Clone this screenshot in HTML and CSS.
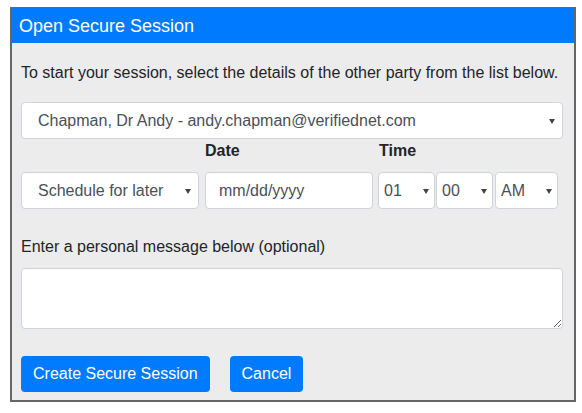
FILE: index.html
```html
<!DOCTYPE html>
<html lang="en">
<head>
    <meta charset="UTF-8">
    <meta name="viewport" content="width=device-width, initial-scale=1.0">
    <title>Open Secure Session</title>
    <link rel="stylesheet" href="styles.css">
</head>
<body>

    <div class="card">
        <div class="card-header">Open Secure Session</div>
        <div class="card-body">
            <p class="intro">To start your session, select the details of the other party from the list below.</p>

            <div class="select-wrap">
                <select class="field field-wide">
                    <option>Chapman, Dr Andy - andy.chapman@verifiednet.com</option>
                </select>
            </div>

            <div class="schedule">
                <span></span>
                <label class="head">Date</label>
                <label class="head">Time</label>

                <div class="select-wrap">
                    <select class="field field-wide">
                        <option>Schedule for later</option>
                        <option>Start now</option>
                    </select>
                </div>
                <input type="text" class="field date-box" placeholder="mm/dd/yyyy">
                <div class="time">
                    <div class="select-wrap hour">
                        <select class="field field-small"><option>01</option></select>
                    </div>
                    <div class="select-wrap minute">
                        <select class="field field-small"><option>00</option></select>
                    </div>
                    <div class="select-wrap ampm">
                        <select class="field field-small"><option>AM</option><option>PM</option></select>
                    </div>
                </div>
            </div>

            <label class="msg-label" for="message">Enter a personal message below (optional)</label>
            <textarea id="message" class="field message"></textarea>

            <div class="actions">
                <button class="btn">Create Secure Session</button>
                <button class="btn">Cancel</button>
            </div>
        </div>
    </div>

</body>
</html>
```

FILE: styles.css
```css
body { margin: 0; font-family: "Liberation Sans", Arial, sans-serif; font-size: 16px; color: #212529; }

.card { width: 562px; margin: 7px 0 0 10px; border: 2px solid #666; border-top-width: 1px; background: #ececec; }
.card-header { height: 35px; line-height: 36px; padding-left: 7px; background: #007bff; color: #fff; font-size: 18px; }
.card-body { padding: 18px 11px 8px 9px; }

.intro { margin: 0 0 17px; line-height: 24px; }

.field {
    display: block; width: 100%; box-sizing: border-box; height: 37px;
    font-family: inherit; font-size: 16px; color: #495057;
    background: #fff; border: 1px solid #ced4da; border-radius: 4px;
}
select.field { appearance: none; -webkit-appearance: none; padding: 0 24px 0 16px; outline: none; }
.field-small { padding: 0 14px 0 5px !important; }
.field::placeholder { color: #495057; opacity: 1; }

.select-wrap { position: relative; }
.select-wrap::after {
    content: ""; position: absolute; right: 8px; top: 50%; margin-top: -2px;
    border-left: 3.5px solid transparent; border-right: 3.5px solid transparent; border-top: 5px solid #444;
    pointer-events: none;
}
.time .select-wrap::after { right: 6px; }

.schedule { display: grid; grid-template-columns: 178px 168px auto; column-gap: 6px; }
.head { font-weight: bold; line-height: 24px; margin-bottom: 9px; }
.date-box { padding: 0 13px; }
.time { display: flex; gap: 1px; margin-left: -1px; }
.hour, .minute { width: 57px; }
.ampm { width: 63px; margin-left: 1px; }

.msg-label { display: block; margin-top: 26px; line-height: 24px; }
.message { height: 61px; margin-top: 9px; resize: vertical; }

.actions { display: flex; gap: 20px; margin-top: 27px; }
.btn {
    height: 36px; padding: 0 12px; border: none; border-radius: 4px;
    background: #007bff; color: #fff; font-family: inherit; font-size: 16px; cursor: pointer;
}
```
